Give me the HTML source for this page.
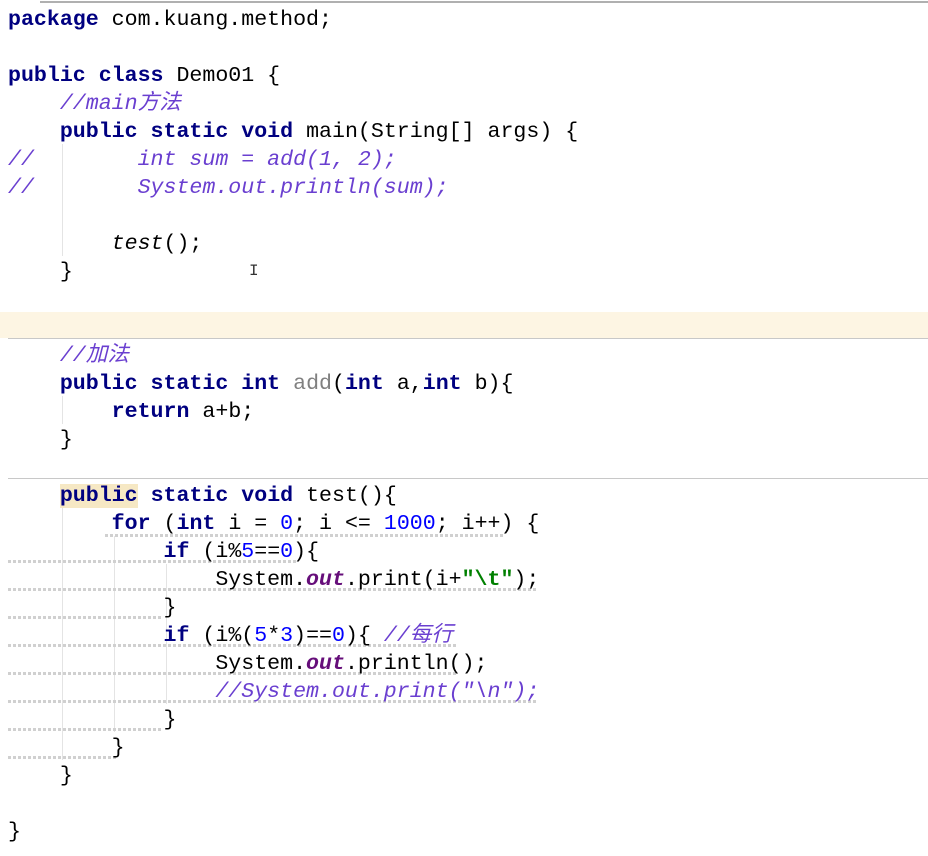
<!DOCTYPE html>
<html><head><meta charset="utf-8"><style>
body{margin:0;width:928px;height:856px;background:#fff;position:relative;overflow:hidden;font-family:"Liberation Mono","Noto Sans CJK SC",monospace;font-size:21.6px;color:#000}
.l{position:absolute;left:8px;height:28px;line-height:28px;white-space:pre;margin-top:2px}
.k{color:#000080;font-weight:bold}
.c{color:#6a3fd0;font-style:italic}
.n{color:#0000ff}
.s{color:#008000;font-weight:bold}
.o{color:#660e7a;font-style:italic;font-weight:bold}
.g{color:#808080}
.hl{position:absolute;left:0;top:312px;width:928px;height:26px;background:#fdf5e3}
.sep{position:absolute;left:8px;width:920px;height:1px;background:#c8c8c8}
.ig{position:absolute;width:1px;background:#e4e4e4}
.w{position:absolute;left:8px;height:3px;background:repeating-linear-gradient(90deg,#d0d0d0 0 3px,transparent 3px 5px)}
</style></head><body>
<div style="position:absolute;left:40px;top:1px;width:888px;height:2px;background:#b0b0b0"></div>
<div class="hl"></div>
<div class="sep" style="top:338px"></div>
<div class="sep" style="top:478px"></div>
<div class="ig" style="left:62px;top:144px;height:112px"></div>
<div class="ig" style="left:62px;top:396px;height:28px"></div>
<div class="ig" style="left:62px;top:508px;height:252px"></div>
<div class="ig" style="left:114px;top:536px;height:196px"></div>
<div class="ig" style="left:166px;top:564px;height:140px"></div>
<div class="w" style="top:534px;left:105px;width:400px"></div>
<div class="w" style="top:560px;width:290px"></div>
<div class="w" style="top:588px;width:530px"></div>
<div class="w" style="top:616px;width:155px"></div>
<div class="w" style="top:644px;width:450px"></div>
<div class="w" style="top:672px;width:450px"></div>
<div class="w" style="top:700px;width:530px"></div>
<div class="w" style="top:728px;width:155px"></div>
<div class="w" style="top:756px;width:110px"></div>
<div class="l" style="top:4px"><span class="k">package</span> com.kuang.method;</div>
<div class="l" style="top:60px"><span class="k">public class</span> Demo01 {</div>
<div class="l" style="top:88px">    <span class="c">//main方法</span></div>
<div class="l" style="top:116px">    <span class="k">public static void</span> main(String[] args) {</div>
<div class="l" style="top:144px"><span class="c">//        int sum = add(1, 2);</span></div>
<div class="l" style="top:172px"><span class="c">//        System.out.println(sum);</span></div>
<div class="l" style="top:228px">        <i>test</i>();</div>
<div class="l" style="top:256px">    }</div>
<div class="l" style="top:340px">    <span class="c">//加法</span></div>
<div class="l" style="top:368px">    <span class="k">public static int</span> <span class="g">add</span>(<span class="k">int</span> a,<span class="k">int</span> b){</div>
<div class="l" style="top:396px">        <span class="k">return</span> a+b;</div>
<div class="l" style="top:424px">    }</div>
<div class="l" style="top:480px">    <span class="k" style="background:#f6e8c4">public</span> <span class="k">static void</span> test(){</div>
<div class="l" style="top:508px">        <span class="k">for</span> (<span class="k">int</span> i = <span class="n">0</span>; i &lt;= <span class="n">1000</span>; i++) {</div>
<div class="l" style="top:536px">            <span class="k">if</span> (i%<span class="n">5</span>==<span class="n">0</span>){</div>
<div class="l" style="top:564px">                System.<span class="o">out</span>.print(i+<span class="s">"\t"</span>);</div>
<div class="l" style="top:592px">            }</div>
<div class="l" style="top:620px">            <span class="k">if</span> (i%(<span class="n">5</span>*<span class="n">3</span>)==<span class="n">0</span>){ <span class="c">//每行</span></div>
<div class="l" style="top:648px">                System.<span class="o">out</span>.println();</div>
<div class="l" style="top:676px">                <span class="c">//System.out.print("\n");</span></div>
<div class="l" style="top:704px">            }</div>
<div class="l" style="top:732px">        }</div>
<div class="l" style="top:760px">    }</div>
<div class="l" style="top:816px">}</div>
<div style="position:absolute;left:249px;top:262px;font-size:16px;color:#333">I</div>
</body></html>
